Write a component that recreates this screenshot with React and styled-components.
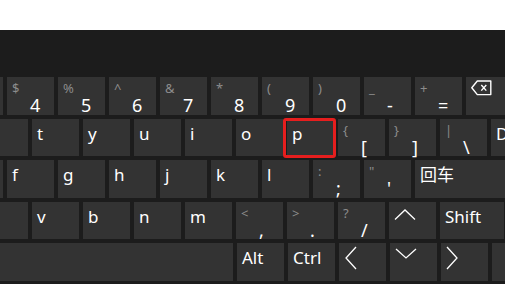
import React from 'react';
import styled, { createGlobalStyle } from 'styled-components';

const GlobalStyle = createGlobalStyle`
  html, body {
    margin: 0;
    padding: 0;
    background: #ffffff;
  }
  body {
    font-family: "Noto Sans", "Open Sans", "Noto Sans CJK SC", sans-serif;
  }
`

const Page = styled.div`
  width: 505px;
  height: 284px;
  overflow: hidden;
  display: flex;
  flex-direction: column;
`

const TopStrip = styled.div`
  height: 30px;
  flex-shrink: 0;
  background: #ffffff;
`

const Keyboard = styled.div`
  flex: 1;
  background: #1c1c1c;
  padding-top: 47px;
  display: flex;
  flex-direction: column;
  gap: 4px;
  overflow: hidden;
`

const Row = styled.div`
  display: flex;
  gap: 4px;
  height: 37.5px;
  flex-shrink: 0;
  margin-left: ${p => p.$offset}px;
`

const Key = styled.div`
  position: relative;
  flex: 0 0 ${p => p.$w || 47}px;
  box-sizing: border-box;
  background: #333333;
  color: #ffffff;
  display: flex;
  flex-direction: column;
  padding: ${p => p.$pad || '5px 5px 0'};
`

const Label = styled.span`
  font-size: 17px;
  line-height: 20px;
  white-space: nowrap;
`

const SubLabel = styled.span`
  font-size: 13px;
  line-height: 14px;
  color: #8c8c8c;
`

const MainLabel = styled.span`
  margin-top: auto;
  padding-left: 18px;
  font-size: 18px;
  line-height: 20px;
`

const Slot = styled.div`
  position: relative;
  display: flex;
  flex: 0 0 47px;
`

const Highlight = styled.span`
  position: absolute;
  top: -1px;
  left: -4px;
  right: -2px;
  bottom: -2px;
  border: 3px solid #e61e1e;
  border-radius: 3px;
  pointer-events: none;
`

const Chevron = ({ w, h, points }) => (
  <svg width={w} height={h} viewBox={`0 0 ${w} ${h}`}>
    <polyline points={points} fill="none" stroke="#ffffff" strokeWidth="1.3" />
  </svg>
)

const Backspace = () => (
  <svg width="21" height="16" viewBox="0 0 21 16">
    <path d="M0.8 7.8 L6.3 1 H19.8 V14.6 H6.3 Z" fill="none" stroke="#ffffff" strokeWidth="1.4" strokeLinejoin="round" />
    <path d="M10.3 5 L15.3 10.6 M15.3 5 L10.3 10.6" stroke="#ffffff" strokeWidth="1.4" />
  </svg>
)

const SymbolKey = ({ sub, main }) => (
  <Key $pad="4px 5px 2.5px">
    <SubLabel>{sub}</SubLabel>
    <MainLabel>{main}</MainLabel>
  </Key>
)

const TextKey = ({ label, w }) => (
  <Key $w={w}>
    <Label>{label}</Label>
  </Key>
)

export default function App() {
  return (
    <Page>
      <GlobalStyle />
      <TopStrip />
      <Keyboard>
        <Row $offset={-44}>
          <Key />
          <SymbolKey sub="$" main="4" />
          <SymbolKey sub="%" main="5" />
          <SymbolKey sub="^" main="6" />
          <SymbolKey sub="&" main="7" />
          <SymbolKey sub="*" main="8" />
          <SymbolKey sub="(" main="9" />
          <SymbolKey sub=")" main="0" />
          <SymbolKey sub="_" main="-" />
          <SymbolKey sub="+" main="=" />
          <Key $w={70} $pad="3px 5px 0">
            <Backspace />
          </Key>
        </Row>
        <Row $offset={-19}>
          <Key />
          {['t', 'y', 'u', 'i', 'o'].map(k => <TextKey key={k} label={k} />)}
          <Slot>
            <TextKey label="p" w={47} />
            <Highlight />
          </Slot>
          <SymbolKey sub="{" main="[" />
          <SymbolKey sub="}" main="]" />
          <SymbolKey sub="|" main="\" />
          <TextKey label="D" />
        </Row>
        <Row $offset={-44}>
          <Key />
          {['f', 'g', 'h', 'j', 'k', 'l'].map(k => <TextKey key={k} label={k} />)}
          <SymbolKey sub=":" main=";" />
          <SymbolKey sub={'"'} main="'" />
          <TextKey label="回车" w={90} />
        </Row>
        <Row $offset={-19}>
          <Key />
          {['v', 'b', 'n', 'm'].map(k => <TextKey key={k} label={k} />)}
          <SymbolKey sub="<" main="," />
          <SymbolKey sub=">" main="." />
          <SymbolKey sub="?" main="/" />
          <Key $pad="7px 5px 0">
            <Chevron w={22} h={11} points="1,10.5 11,1 21,10.5" />
          </Key>
          <TextKey label="Shift" w={64} />
        </Row>
        <Row $offset={0}>
          <Key $w={233} />
          <TextKey label="Alt" />
          <TextKey label="Ctrl" />
          <Key $pad="3px 6px 0">
            <Chevron w={12} h={24} points="11,1 1,12 11,23" />
          </Key>
          <Key $pad="5px 5px 0">
            <Chevron w={22} h={11} points="1,1 11,10 21,1" />
          </Key>
          <Key $pad="3px 5px 0">
            <Chevron w={12} h={24} points="1,1 11,12 1,23" />
          </Key>
          <Key $w={13} />
        </Row>
      </Keyboard>
    </Page>
  )
}
